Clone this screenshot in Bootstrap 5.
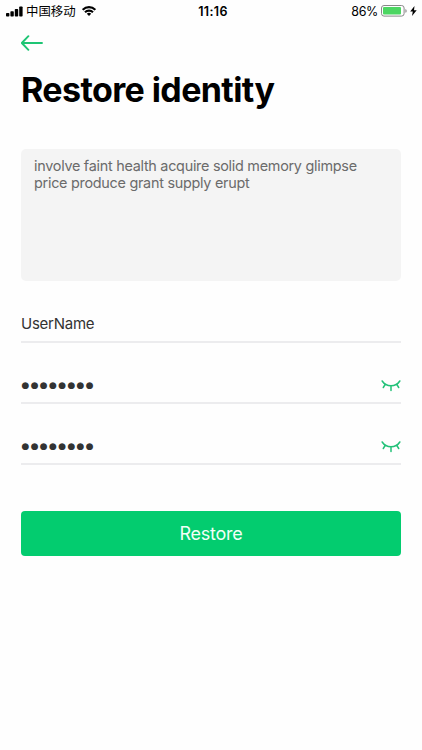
<!DOCTYPE html>
<html lang="en">
<head>
<meta charset="utf-8">
<meta name="viewport" content="width=device-width, initial-scale=1">
<title>Restore identity</title>
<link href="https://cdn.jsdelivr.net/npm/bootstrap@5.3.0/dist/css/bootstrap.min.css" rel="stylesheet">
<style>
body{font-family:Inter,"Noto Sans CJK SC",sans-serif;background:#fefefe;color:#000;min-height:750px;overflow:hidden}
.statusbar{height:22px;padding:0 5px 0 6px;font-size:12.5px;line-height:22px}
.status-side{flex:1 1 0}
.status-time{font-weight:600;margin-left:3px;letter-spacing:.35px;padding-top:1px}
.battery-level{letter-spacing:-.35px;padding-top:1px}
.battery{margin-left:3px}
.bolt{margin-left:3px}
.carrier{font-size:12.4px;margin-left:3px;padding-top:1px}
.signal-wifi{margin-left:6px}
.page-body{padding:0 21px}
.back-link{height:42px;padding-top:13px;line-height:0}
.page-title{font-size:34px;line-height:42px;font-weight:700;letter-spacing:-.6px;margin:5px 0 38px}
.phrase-box{height:132px;background:#f4f4f4;border-radius:5px;padding:8px 13px;font-size:14.4px;line-height:17px;letter-spacing:-.27px;color:#6b6b6b}
.field-row{height:61px;padding-top:27px;border-bottom:2px solid #ececee;font-size:15px;letter-spacing:-.25px;color:#333}
.phrase-box + .field-row{height:62px}
.bullets{font-family:"DejaVu Sans",sans-serif;font-size:9px;letter-spacing:1.33px;line-height:16px;margin-left:.5px;padding-bottom:3px}
.btn-restore{--bs-btn-color:#f2fff8;--bs-btn-bg:#03cc6f;--bs-btn-hover-color:#fff;--bs-btn-hover-bg:#02b963;height:45px;margin-top:46px;border:0;border-radius:4px;font-size:18px;letter-spacing:-.25px;padding:0}
</style>
</head>
<body>
<header class="statusbar d-flex align-items-center">
  <div class="status-side d-flex align-items-center">
    <svg width="17" height="11" viewBox="0 0 17 11"><rect x="0" y="7" width="3.4" height="3.5" rx=".8"/><rect x="4.4" y="5.2" width="3.4" height="5.3" rx=".8"/><rect x="8.8" y="3" width="3.4" height="7.5" rx=".8"/><rect x="13.2" y=".5" width="3.4" height="10" rx=".8"/></svg>
    <span class="carrier">中国移动</span>
    <svg class="signal-wifi" width="14" height="10" viewBox="0 0 14 10"><g fill="none" stroke="#000" stroke-width="2.1"><path d="M.7 3.9C4.2.2 9.8.2 13.3 3.9"/><path d="M3 6.3C5.2 4.1 8.8 4.1 11 6.3"/></g><path d="M4.8 7.7Q7 5.8 9.2 7.7L7 9.9Z"/></svg>
  </div>
  <div class="status-time">11:16</div>
  <div class="status-side d-flex align-items-center justify-content-end">
    <span class="battery-level">86%</span>
    <svg class="battery" width="26" height="12" viewBox="0 0 26 12"><rect x=".5" y=".5" width="22.6" height="10.6" rx="2.5" fill="none" stroke="#888"/><rect x="2" y="2" width="18" height="7.6" rx="1" fill="#4cd662"/><path d="M24.4 4v3.8q1.3-.5 1.3-1.9T24.4 4" fill="#888"/></svg>
    <svg class="bolt" width="7" height="10" viewBox="0 0 7 10"><path d="M4.5 0 .2 5.5h2.6L2 10l4.7-5.7H4Z"/></svg>
  </div>
</header>
<main class="page-body">
  <div class="back-link"><a href="#" aria-label="Back"><svg width="22" height="16" viewBox="0 0 22 16" fill="none" stroke="#1ec574" stroke-width="1.9" stroke-linecap="round" stroke-linejoin="round"><path d="M21 8H1M7.4 1.2.8 8l6.6 6.8"/></svg></a></div>
  <h1 class="page-title">Restore identity</h1>
  <form>
    <div class="phrase-box">involve faint health acquire solid memory glimpse price produce grant supply erupt</div>
    <div class="field-row d-flex align-items-center"><span>UserName</span></div>
    <div class="field-row d-flex align-items-center justify-content-between"><span class="bullets">●●●●●●●●</span>
      <svg width="20" height="12" viewBox="0 0 20 12" fill="none" stroke="#22c178" stroke-width="1.5" stroke-linecap="round"><path d="M1.2 1C5.2 7.4 14.8 7.4 18.8 1M4.2 4.4 2.3 7.5M10 6v4.5M15.8 4.4l1.9 3.1"/></svg></div>
    <div class="field-row d-flex align-items-center justify-content-between"><span class="bullets">●●●●●●●●</span>
      <svg width="20" height="12" viewBox="0 0 20 12" fill="none" stroke="#22c178" stroke-width="1.5" stroke-linecap="round"><path d="M1.2 1C5.2 7.4 14.8 7.4 18.8 1M4.2 4.4 2.3 7.5M10 6v4.5M15.8 4.4l1.9 3.1"/></svg></div>
    <button type="button" class="btn btn-restore w-100">Restore</button>
  </form>
</main>
<script src="https://cdn.jsdelivr.net/npm/bootstrap@5.3.0/dist/js/bootstrap.bundle.min.js"></script>
</body>
</html>
